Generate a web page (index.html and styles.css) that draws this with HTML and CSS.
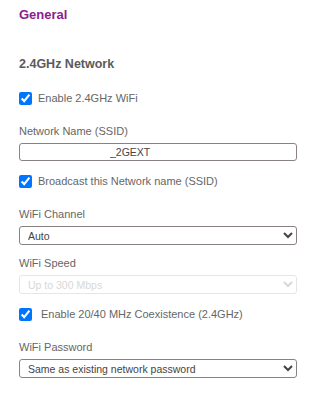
FILE: index.html
```html
<!DOCTYPE html>
<html lang="en">
<head>
  <meta charset="UTF-8">
  <meta name="viewport" content="width=device-width, initial-scale=1.0">
  <title>General - 2.4GHz Network</title>
  <link rel="stylesheet" href="styles.css">
</head>
<body>
  <div class="settings">
    <h1 class="page-title">General</h1>

    <h2 class="section-title">2.4GHz Network</h2>

    <form class="wifi-form">
      <div class="check-row">
        <input type="checkbox" id="enable24" checked>
        <label for="enable24">Enable 2.4GHz WiFi</label>
      </div>

      <div class="field">
        <label for="ssid">Network Name (SSID)</label>
        <input type="text" id="ssid" class="ssid-input" value="_2GEXT">
      </div>

      <div class="check-row">
        <input type="checkbox" id="broadcast" checked>
        <label for="broadcast">Broadcast this Network name (SSID)</label>
      </div>

      <div class="field">
        <label for="channel">WiFi Channel</label>
        <select id="channel">
          <option>Auto</option>
        </select>
      </div>

      <div class="field">
        <label for="speed">WiFi Speed</label>
        <select id="speed" disabled>
          <option>Up to 300 Mbps</option>
        </select>
      </div>

      <div class="check-row wide">
        <input type="checkbox" id="coexist" checked>
        <label for="coexist">Enable 20/40 MHz Coexistence (2.4GHz)</label>
      </div>

      <div class="field">
        <label for="password">WiFi Password</label>
        <select id="password">
          <option>Same as existing network password</option>
        </select>
      </div>
    </form>
  </div>
</body>
</html>
```

FILE: styles.css
```css
html, body {
  margin: 0;
  padding: 0;
  background: #fff;
}
body {
  font-family: "Liberation Sans", Arial, sans-serif;
  color: #666;
}

.settings {
  padding: 7px 36px 0 19px;
}

.page-title {
  margin: 0;
  font-size: 13px;
  line-height: 16px;
  color: #8c1d8c;
}

.section-title {
  margin: 34px 0 0;
  font-size: 12.5px;
  line-height: 15px;
  color: #5a5a5a;
}

/* Checkbox rows */
.check-row {
  display: flex;
  align-items: center;
  gap: 6px;
  height: 16px;
  margin-top: 12px;
  font-size: 11px;
}
.check-row:first-child {
  margin-top: 18px;
}
.check-row input {
  width: 13px;
  height: 13px;
  margin: 0;
  accent-color: #0075ff;
}
.check-row label {
  color: #666;
}
.check-row.wide {
  gap: 9px;
}

/* Label + control */
.field {
  margin-top: 11px;
}
.check-row + .field {
  margin-top: 18px;
}
.field label {
  display: block;
  font-size: 11px;
  line-height: 14px;
  color: #666;
  margin-bottom: 5px;
}
.field input,
.field select {
  display: block;
  box-sizing: border-box;
  width: 278px;
  height: 19px;
  padding: 0 4px;
  font-family: "Liberation Sans", Arial, sans-serif;
  font-size: 10.5px;
  color: #444;
  background: #fff;
  border: 1px solid #8a8280;
  border-radius: 3px;
  outline: none;
}
.field input.ssid-input {
  height: 18px;
  padding-left: 90px;
}
.field select:disabled {
  color: #c8c8c8;
  border-color: #dcdcdc;
}
```
